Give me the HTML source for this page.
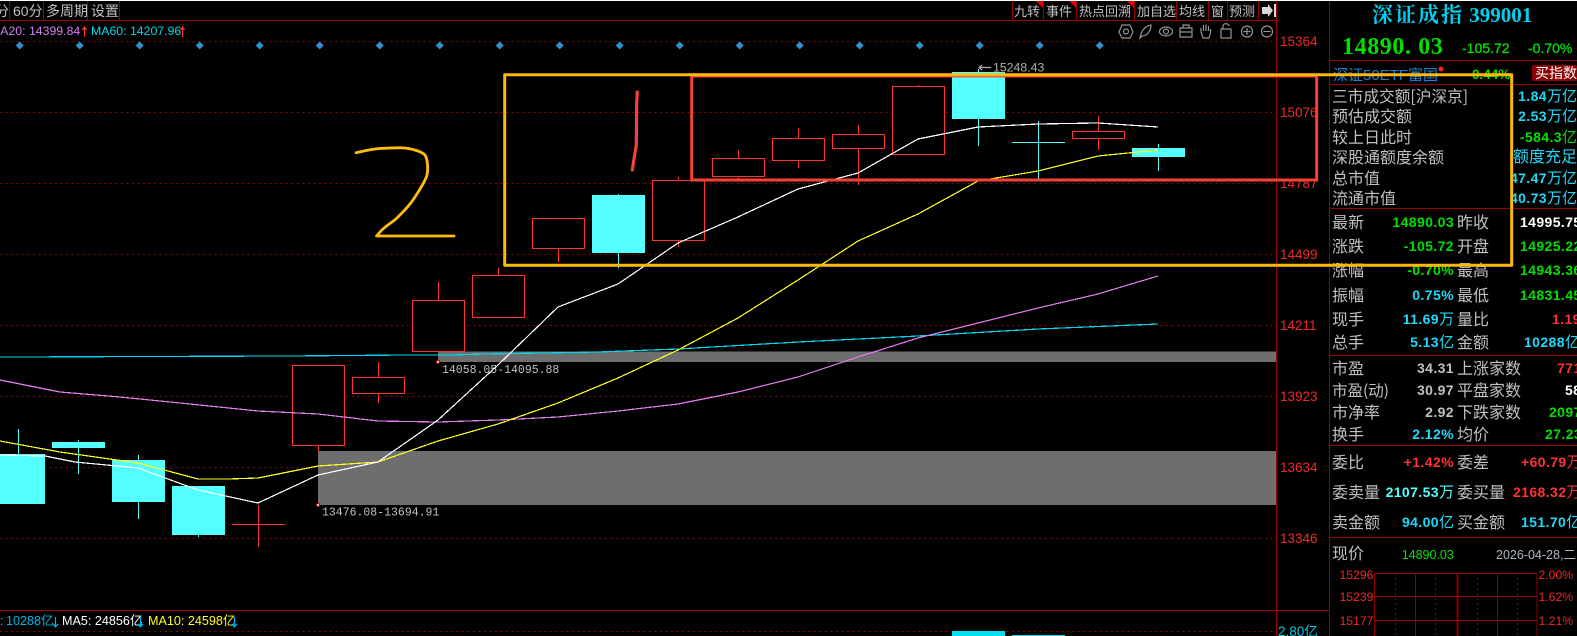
<!DOCTYPE html>
<html><head><meta charset="utf-8"><style>
html,body{margin:0;padding:0;background:#000;width:1577px;height:636px;overflow:hidden}
svg{display:block}
text{font-family:"Liberation Sans","WenQuanYi Zen Hei","Noto Sans CJK SC",sans-serif}
.c{font-family:"WenQuanYi Zen Hei","Noto Sans CJK SC",sans-serif;font-size:16px;fill:#c0c0c0}
.t{font-family:"WenQuanYi Zen Hei","Noto Sans CJK SC",sans-serif;font-size:13px;fill:#c0c0c0}
.v{font-family:"Liberation Sans","WenQuanYi Zen Hei",sans-serif;font-size:14px;font-weight:bold;letter-spacing:.4px}
.v tspan{font-weight:normal;font-size:15px;letter-spacing:0}
.a{font-size:13.5px;fill:#f02828}
.r{stroke:#ff3232;stroke-width:1.4;fill:#000}
.w{stroke:#ff3232;stroke-width:1.2}
.k{stroke:#54ffff;stroke-width:1.2}
.b{fill:#54ffff}
.i{fill:none;stroke:#949494;stroke-width:1.2}
.crisp{shape-rendering:crispEdges}
</style></head><body>
<svg width="1577" height="636" viewBox="0 0 1577 636" xmlns="http://www.w3.org/2000/svg">
<rect width="1577" height="636" fill="#000"/>
<rect width="1577" height="1" fill="#fff"/>

<!-- grid -->
<g stroke="#8c0000" stroke-width="1" stroke-dasharray="2 3.5" class="crisp">
<path d="M0 41.5H1276M0 112.5H1276M0 183.5H1276M0 254.5H1276M0 325.5H1276M0 396.5H1276M0 467.5H1276M0 538.5H1276M0 631.5H1276"/>
</g>
<g stroke="#960000" stroke-width="1" fill="none" class="crisp">
<path d="M0 20.5H1276M0 610.5H1329M1276.5 20V636M1329.5 1V636M1329 60.5H1577M1329 84.5H1577M1329 208.5H1577M1329 355.5H1577M1329 445.5H1577M1329 537.5H1577"/>
<path d="M9.5 1V20M43.5 1V20M87.5 1V20M119.5 1V20M1012.5 1V20M1043.5 1V20M1076.5 1V20M1134.5 1V20M1176.5 1V20M1208.5 1V20M1227.5 1V20M1258.5 1V20M1276.5 1V20"/>
</g>

<!-- toolbar -->
<text class="t" x="-5" y="16" style="font-size:14px">分</text>
<text class="t" x="13" y="16" style="font-size:14px;font-family:'Liberation Sans','WenQuanYi Zen Hei',sans-serif">60分</text>
<text class="t" x="46" y="16" style="font-size:14px">多周期</text>
<text class="t" x="91" y="16" style="font-size:14px">设置</text>
<text class="t" x="1014" y="16">九转</text>
<text class="t" x="1046" y="16">事件</text>
<text class="t" x="1079" y="16">热点回溯</text>
<text class="t" x="1137" y="16">加自选</text>
<text class="t" x="1179" y="16">均线</text>
<text class="t" x="1211" y="16">窗</text>
<text class="t" x="1229" y="16">预测</text>
<path d="M1036 1H1043V8ZM1069 1H1076V8ZM1127 1H1134V8Z" fill="#e00000"/>
<path d="M1262 7H1268V4L1273 10.500L1268 17V14H1262ZM1274 4H1276V17H1274Z" fill="#d8d8d8"/>

<!-- tool icons -->
<g class="i">
<path d="M1122 25H1130L1133 32L1130 38H1122L1119 32Z" stroke-linejoin="round"/><circle cx="1126" cy="31.500" r="2.500"/>
<path d="M1140 38C1141 31 1145 26 1151 25C1151 31 1147 36 1142 36Z"/>
<ellipse cx="1166" cy="31.500" rx="6.500" ry="4.500"/><circle cx="1166" cy="31.500" r="2.500"/>
<path d="M1180 28H1192V37H1180ZM1183 28V25H1189V28M1180 32H1192"/>
<path d="M1201 32V28M1203.500 31V25M1206 31V24.500M1208.500 31V26M1210.500 33V29M1201 32L1203 38H1209L1210.500 33"/>
<path d="M1221 29H1231V38H1221ZM1223 29V26C1223 23 1229 23 1229 26"/>
<circle cx="1247" cy="31.500" r="5.500"/><path d="M1243.500 31.500H1250.500M1247 28V35"/>
<circle cx="1267" cy="31.500" r="5.500"/><path d="M1263.500 31.500H1270.500"/>
</g>

<!-- MA text -->
<text x="-10" y="35" font-size="12.300" fill="#d27ef0">MA20: 14399.84</text>
<text x="91" y="35" font-size="12.300" fill="#00d8e8">MA60: 14207.96</text>
<path d="M84.500 37V27.500M82.500 30L84.500 27L86.500 30M182.500 37V27.500M180.500 30L182.500 27L184.500 30" stroke="#ff3232" stroke-width="1.200" fill="none"/>

<!-- diamonds -->
<g fill="#2e93c8">
<path d="M19.700 41.500l4 4-4 4-4-4zM79.700 41.500l4 4-4 4-4-4zM139.700 41.500l4 4-4 4-4-4zM199.700 41.500l4 4-4 4-4-4zM259.700 41.500l4 4-4 4-4-4zM319.700 41.500l4 4-4 4-4-4zM379.700 41.500l4 4-4 4-4-4zM439.700 41.500l4 4-4 4-4-4zM499.700 41.500l4 4-4 4-4-4zM559.700 41.500l4 4-4 4-4-4zM619.700 41.500l4 4-4 4-4-4zM679.700 41.500l4 4-4 4-4-4zM739.700 41.500l4 4-4 4-4-4zM799.700 41.500l4 4-4 4-4-4zM859.700 41.500l4 4-4 4-4-4zM919.700 41.500l4 4-4 4-4-4zM979.700 41.500l4 4-4 4-4-4zM1039.700 41.500l4 4-4 4-4-4zM1099.700 41.500l4 4-4 4-4-4z"/>
</g>

<!-- grey zones -->
<rect x="318" y="451" width="958" height="54" fill="#6e6e6e"/>
<rect x="438" y="351.500" width="838" height="10.500" fill="#6e6e6e"/>
<circle cx="318" cy="505" r="1.500" fill="#fff" stroke="#b00000"/>
<circle cx="438" cy="362" r="1.500" fill="#fff" stroke="#b00000"/>
<text x="322" y="515.500" font-size="11.500" fill="#c0c0c0" style="font-family:'Liberation Mono',monospace">13476.08-13694.91</text>
<text x="442" y="373" font-size="11.500" fill="#c0c0c0" style="font-family:'Liberation Mono',monospace">14058.05-14095.88</text>

<!-- candle wicks -->
<g class="k crisp">
<path d="M18.500 429V454M78.500 440V474M138.500 455V519M198.500 535V537M618.500 194V268M978.500 69V146M1038.500 121V179M1158.500 144V171"/>
<path d="M1012 142.500H1065"/>
</g>
<g class="w crisp">
<path d="M258.500 505V547M232 524.500H285M318.500 445V451M378.500 362V403M438.500 282V300M498.500 268V275M558.500 248V262M678.500 177V247M738.500 150V179M798.500 128V168M858.500 125V185M918.500 85V87M1098.500 116V150"/>
</g>

<!-- cyan bodies -->
<g class="b crisp">
<rect x="0" y="454" width="45" height="50"/>
<rect x="52" y="442" width="53" height="6"/>
<rect x="112" y="460" width="53" height="42"/>
<rect x="172" y="486" width="53" height="49"/>
<rect x="592" y="195" width="53" height="58"/>
<rect x="952" y="72" width="53" height="47"/>
<rect x="1132" y="148" width="53" height="9"/>
</g>
<!-- red bodies -->
<g class="r crisp">
<rect x="292.500" y="365.500" width="52" height="80"/>
<rect x="352.500" y="377.500" width="52" height="16"/>
<rect x="412.500" y="300.500" width="52" height="51"/>
<rect x="472.500" y="275.500" width="52" height="42"/>
<rect x="532.500" y="218.500" width="52" height="30"/>
<rect x="652.500" y="180.500" width="52" height="60"/>
<rect x="712.500" y="158.500" width="52" height="18"/>
<rect x="772.500" y="138.500" width="52" height="22"/>
<rect x="832.500" y="134.500" width="52" height="14"/>
<rect x="892.500" y="86.500" width="52" height="68"/>
<rect x="1072.500" y="131.500" width="52" height="7"/>
</g>
<path d="M858.500 125V134M858.500 149V185M1098.500 116V131M1098.500 139V150" stroke="#ff3232" stroke-width="1.200" class="crisp"/>

<!-- MA lines -->
<g fill="none" stroke-width="1.200" class="crisp">
<polyline stroke="#00d8f0" points="0,357 8,357 288,356 408,355 453,355 483,354 543,353 598,352 678,349 798,342 918,336 1038,329 1158,324"/>
<polyline stroke="#e47ef0" points="0,380 60,392 120,397 180,403 258,411 318,414 378,421 438,422 498,420 558,417 618,411 678,404 738,392 798,377 858,357 918,338 978,323 1038,308 1098,294 1158,276"/>
<polyline stroke="#ffff20" points="0,441 60,452 138,463 198,479 228,479 258,478 318,466 378,462 438,441 498,424 558,403 618,378 678,350 738,318 798,280 858,241 918,214 978,181 1038,171 1098,156 1158,150"/>
<polyline stroke="#ffffff" points="0,455 45,456 75,462 138,468 198,490 258,503 318,475 378,462 438,420 498,365 558,307 618,284 678,243 738,217 798,189 858,173 918,139 978,127 1038,124 1098,123 1158,127"/>
</g>

<!-- high marker -->
<path d="M979 67.500H991M982 65L979 67.500L982 70" stroke="#b0b0b0" stroke-width="1.200" fill="none"/>
<text x="993" y="71.500" font-size="12.300" fill="#b0b0b0">15248.43</text>

<!-- axis labels -->
<text class="a" x="1280" y="46">15364</text>
<text class="a" x="1280" y="117">15076</text>
<text class="a" x="1280" y="188">14787</text>
<text class="a" x="1280" y="259">14499</text>
<text class="a" x="1280" y="330">14211</text>
<text class="a" x="1280" y="401">13923</text>
<text class="a" x="1280" y="472">13634</text>
<text class="a" x="1280" y="543">13346</text>
<text x="1278" y="636" font-size="13.500" fill="#00c8e8">2.80亿</text>

<!-- bottom -->
<text x="0" y="625" font-size="12.600" fill="#00b8e8">: </text>
<text x="6" y="625" font-size="12.600" fill="#00b8e8">10288亿</text>
<text x="62" y="625" font-size="12.600" fill="#fff">MA5: 24856亿</text>
<text x="148" y="625" font-size="12.600" fill="#ffff20">MA10: 24598亿</text>
<path d="M55.500 617V627M53 624L55.500 627L58 624M140.500 617V627M138 624L140.500 627L143 624M234.500 617V627M232 624L234.500 627L237 624" stroke="#00b8e8" stroke-width="1.200" fill="none"/>
<rect x="952" y="631" width="53" height="5" fill="#00e0f0"/>
<rect x="1012" y="635" width="53" height="1" fill="#00e0f0"/>

<!-- right panel header -->
<text x="1372" y="22" font-size="21px" font-weight="bold" fill="#00d0f0" style="font-family:'Liberation Serif','Noto Serif CJK SC',serif"><tspan letter-spacing="2">深证成指</tspan> 399001</text>
<text x="1342" y="54" font-size="24px" font-weight="bold" fill="#00e000" style="font-family:'Liberation Serif',serif;letter-spacing:.6px">14890. 03</text>
<text x="1462" y="53" font-size="14px" fill="#00e000" stroke="#00e000" stroke-width=".3">-105.72</text>
<text x="1528" y="53" font-size="14px" fill="#00e000" stroke="#00e000" stroke-width=".3">-0.70%</text>
<text x="1333" y="80" font-size="15px" fill="#1f80d8" style="font-family:'WenQuanYi Zen Hei',sans-serif">深证50ETF富国</text>
<circle cx="1441" cy="69" r="2.500" fill="#ff2020"/>
<text x="1472" y="79" font-size="13.500" font-weight="bold" fill="#00e000">0.44%</text>
<rect x="1532" y="65" width="45" height="16" rx="2" fill="#8c0000"/>
<text x="1535" y="78" class="t" style="fill:#fff;font-size:14px">买指数</text>

<!-- info rows -->
<g class="c">
<text class="c" x="1332" y="102" style="font-size:15.700px">三市成交额[沪深京]</text>
<text class="c" x="1332" y="122">预估成交额</text>
<text class="c" x="1332" y="143">较上日此时</text>
<text class="c" x="1332" y="163">深股通额度余额</text>
<text class="c" x="1332" y="184">总市值</text>
<text class="c" x="1332" y="204">流通市值</text>
<text class="c" x="1332" y="228">最新</text><text class="c" x="1457" y="228">昨收</text>
<text class="c" x="1332" y="252">涨跌</text><text class="c" x="1457" y="252">开盘</text>
<text class="c" x="1332" y="276">涨幅</text><text class="c" x="1457" y="276">最高</text>
<text class="c" x="1332" y="301">振幅</text><text class="c" x="1457" y="301">最低</text>
<text class="c" x="1332" y="325">现手</text><text class="c" x="1457" y="325">量比</text>
<text class="c" x="1332" y="348">总手</text><text class="c" x="1457" y="348">金额</text>
<text class="c" x="1332" y="374">市盈</text><text class="c" x="1457" y="374">上涨家数</text>
<text class="c" x="1332" y="396" style="font-size:15.500px">市盈(动)</text><text class="c" x="1457" y="396">平盘家数</text>
<text class="c" x="1332" y="418">市净率</text><text class="c" x="1457" y="418">下跌家数</text>
<text class="c" x="1332" y="440">换手</text><text class="c" x="1457" y="440">均价</text>
<text class="c" x="1332" y="468">委比</text><text class="c" x="1457" y="468">委差</text>
<text class="c" x="1332" y="498">委卖量</text><text class="c" x="1457" y="498">委买量</text>
<text class="c" x="1332" y="528">卖金额</text><text class="c" x="1457" y="528">买金额</text>
<text class="c" x="1332" y="559">现价</text>
</g>

<!-- top block values -->
<g text-anchor="end">
<text class="v" x="1577" y="101" fill="#20d8f8">1.84<tspan>万亿</tspan></text>
<text class="v" x="1577" y="121" fill="#20d8f8">2.53<tspan>万亿</tspan></text>
<text class="v" x="1577" y="142" fill="#00e000">-584.3<tspan>亿</tspan></text>
<text class="v" x="1577" y="162" fill="#20d8f8"><tspan style="font-size:16px">额度充足</tspan></text>
<text class="v" x="1577" y="183" fill="#20d8f8">47.47<tspan>万亿</tspan></text>
<text class="v" x="1577" y="203" fill="#20d8f8">40.73<tspan>万亿</tspan></text>
</g>
<g text-anchor="end">
<text class="v" x="1454" y="227" fill="#00e000">14890.03</text>
<text class="v" x="1454" y="251" fill="#00e000">-105.72</text>
<text class="v" x="1454" y="275" fill="#00e000">-0.70%</text>
<text class="v" x="1454" y="300" fill="#20d8f8">0.75%</text>
<text class="v" x="1454" y="324" fill="#20d8f8">11.69<tspan>万</tspan></text>
<text class="v" x="1454" y="347" fill="#20d8f8">5.13<tspan>亿</tspan></text>
<text class="v" x="1454" y="373" fill="#c0c0c0">34.31</text>
<text class="v" x="1454" y="395" fill="#c0c0c0">30.97</text>
<text class="v" x="1454" y="417" fill="#c0c0c0">2.92</text>
<text class="v" x="1454" y="439" fill="#20d8f8">2.12%</text>
<text class="v" x="1454" y="467" fill="#ff3232">+1.42%</text>
<text class="v" x="1454" y="497" fill="#54ffff">2107.53<tspan>万</tspan></text>
<text class="v" x="1454" y="527" fill="#20d8f8">94.00<tspan>亿</tspan></text>
</g>
<g>
<text class="v" x="1520" y="227" fill="#fff">14995.75</text>
<text class="v" x="1520" y="251" fill="#00e000">14925.22</text>
<text class="v" x="1520" y="275" fill="#00e000">14943.36</text>
<text class="v" x="1520" y="300" fill="#00e000">14831.45</text>
<text class="v" x="1552" y="324" fill="#ff3232">1.19</text>
<text class="v" x="1524" y="347" fill="#20d8f8">10288<tspan>亿</tspan></text>
<text class="v" x="1557" y="373" fill="#ff3232">771</text>
<text class="v" x="1565" y="395" fill="#fff">58</text>
<text class="v" x="1549" y="417" fill="#00e000">2097</text>
<text class="v" x="1545" y="439" fill="#00e000">27.23</text>
<text class="v" x="1521" y="467" fill="#ff3232">+60.79<tspan>万</tspan></text>
<text class="v" x="1513" y="497" fill="#ff3232">2168.32<tspan>万</tspan></text>
<text class="v" x="1521" y="527" fill="#20d8f8">151.70<tspan>亿</tspan></text>
</g>
<text x="1401.700" y="559" font-size="12.500" fill="#00e000">14890.03</text>
<text x="1496" y="559" font-size="12.500" fill="#b0b8c8">2026-04-28,二</text>

<!-- mini chart -->
<g fill="none" stroke="#8c0000" stroke-width="1" class="crisp">
<path d="M1374.500 573.500H1537M1374.500 596.500H1537M1374.500 620.500H1537M1374.500 573V636M1415.500 573V636M1497.500 573V636M1537 573V636"/>
<path d="M1457.500 573V636" stroke-width="2"/>
<path d="M1395.500 573V636M1435.500 573V636M1477.500 573V636M1517.500 573V636" stroke-dasharray="2 3"/>
</g>
<g font-size="12.200px" fill="#f02828">
<text x="1339.500" y="579">15296</text><text x="1339.500" y="601">15239</text><text x="1339.500" y="625">15177</text>
<text x="1538.500" y="579">2.00%</text><text x="1538.500" y="601">1.62%</text><text x="1538.500" y="625">1.21%</text>
</g>

<!-- annotations -->
<g fill="none" stroke-linecap="round" stroke-linejoin="round">
<path d="M356 152.700C364 151 372 149 380 148.500C390 148 400 147.500 405 148C414 149 422 152 425 155C428 160 428 170 427 175C425 182 420 189 415 197C410 205 404 211 398 217C392 223 385 226 380 232L376.500 236H454" stroke="#ffbe0a" stroke-width="2.800"/>
<path d="M637.300 92L636.700 103L636.300 145L634.300 157L632.300 170" stroke="#f44336" stroke-width="3.200"/>
<path d="M691.700 76H1316.700V180H691.700Z" stroke="#f44336" stroke-width="3" stroke-linejoin="miter"/>
<path d="M504.700 74.700H1511.700V265.300H504.700Z" stroke="#ffb80d" stroke-width="3"/>
</g>
</svg>
</body></html>
